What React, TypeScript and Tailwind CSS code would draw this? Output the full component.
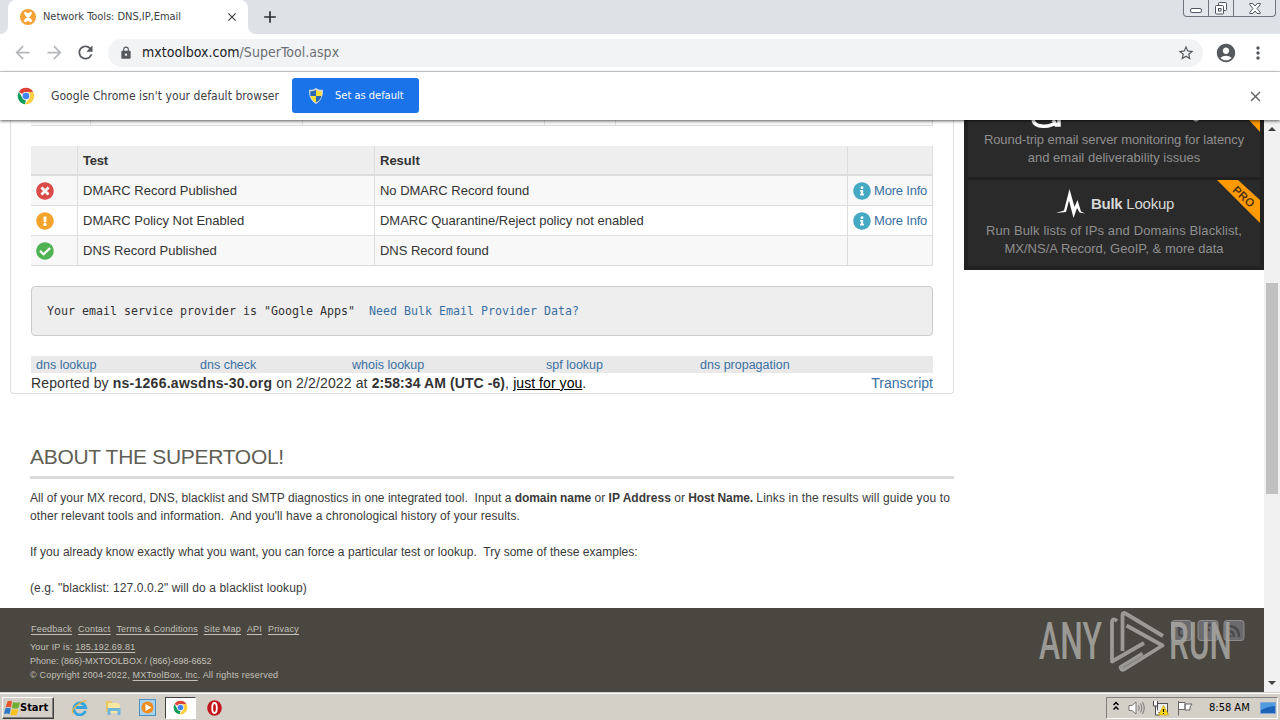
import type { ReactNode } from "react";
import {
  FaCheckCircle,
  FaExclamationCircle,
  FaInfoCircle,
  FaTimesCircle,
} from "react-icons/fa";
import {
  MdAccountCircle,
  MdAdd,
  MdArrowBack,
  MdArrowForward,
  MdClose,
  MdLock,
  MdMoreVert,
  MdRefresh,
  MdStarBorder,
} from "react-icons/md";

const MxIcon = () => (
  <svg width="16" height="16" viewBox="0 0 16 16">
    <circle cx="8" cy="8" r="8" fill="#f5a133" />
    <path d="M4.500 3.200Q8 7 11.500 3.200M4.500 12.800Q8 9 11.500 12.800M5 4l6 8M11 4l-6 8" stroke="#fff" strokeWidth="2.400" fill="none" />
  </svg>
);

const ChromeIcon = ({ size }: { size: number }) => (
  <svg width={size} height={size} viewBox="0 0 48 48">
    <circle cx="24" cy="24" r="22" fill="#fff" />
    <path d="M24 2a22 22 0 0 1 19.050 11H24a11 11 0 0 0-9.530 5.500L4.950 13A22 22 0 0 1 24 2z" fill="#db4437" />
    <path d="M4.950 13l9.520 16.500A11 11 0 0 0 24 35l-3 10.800A22 22 0 0 1 4.950 13z" fill="#0f9d58" />
    <path d="M43.050 13A22 22 0 0 1 21 45.800l12.500-16.300A11 11 0 0 0 24 13z" fill="#ffcd40" />
    <circle cx="24" cy="24" r="11" fill="#f1f1f1" />
    <circle cx="24" cy="24" r="8.800" fill="#4285f4" />
  </svg>
);

const ShieldIcon = () => (
  <svg width="16" height="16" viewBox="0 0 16 16">
    <path d="M8 0C10 1.600 12.500 2 15 1.800 15.300 8 13.200 13 8 16 2.800 13 .7 8 1 1.800 3.500 2 6 1.600 8 0z" fill="#cfd6dc" />
    <path d="M8 1.800v6.200H2.500C2.200 6.500 2.200 5 2.300 3.300 4.500 3.300 6.500 3 8 1.800zM8 8h5.400C12.800 10.800 11 13 8 14.500z" fill="#2a68b4" />
    <path d="M8 1.800v6.200h5.500c.3-1.500.3-3 .2-4.700C11.500 3.300 9.500 3 8 1.800zM8 8H2.600C3.200 10.800 5 13 8 14.500z" fill="#f9dd3a" />
  </svg>
);

const WindowButtons = () => (
  <div className="flex h-[17px] w-[93px] rounded-b-[4px] border border-t-0 border-[#6f757e] bg-[#e3e6eb]">
    <div className="flex w-[25px] items-center justify-center border-r border-[#6f757e]">
      <span className="mt-[5px] h-[5px] w-3 rounded-[2px] border border-[#50555e] bg-white" />
    </div>
    <div className="flex w-[25px] items-center justify-center border-r border-[#6f757e]">
      <svg width="14" height="13" viewBox="0 0 14 13" fill="#fff" stroke="#50555e">
        <rect x="4.500" y=".5" width="8" height="8" rx="1" />
        <rect x="1.500" y="3.500" width="8" height="8.500" rx="1" />
        <rect x="4.500" y="6.500" width="2.500" height="2.500" />
      </svg>
    </div>
    <div className="flex flex-1 items-center justify-center">
      <svg width="12" height="11" viewBox="0 0 12 11" fill="#fff" stroke="#50555e">
        <path d="M.8.500h3l2.200 2.500L8.200.500h3v1.200L8 5.500l3.200 3.800v1.200h-3L6 8l-2.200 2.500h-3V9.300L4 5.500.8 1.700z" />
      </svg>
    </div>
  </div>
);

const TabStrip = () => (
  <div className="flex h-[34px] justify-between bg-[#dee1e6]">
    <div className="flex">
      <div className="w-2 bg-white">
        <div className="h-full rounded-br-lg bg-[#dee1e6]" />
      </div>
      <div className="flex w-60 items-center rounded-t-lg bg-white pr-[9px] pl-3">
        <MxIcon />
        <span className="ml-[7px] flex-1 text-[11px] tracking-[-0.04px] whitespace-nowrap text-[#3c4043]">
          Network Tools: DNS,IP,Email
        </span>
        <MdClose size={14} className="text-[#3c4043]" />
      </div>
      <div className="w-2 bg-white">
        <div className="h-full rounded-bl-lg bg-[#dee1e6]" />
      </div>
      <MdAdd size={20} className="mt-[7px] ml-[4px] text-[#2c2f33]" />
    </div>
    <div className="mr-1">
      <WindowButtons />
    </div>
  </div>
);

const Toolbar = () => (
  <div className="flex h-[38px] items-center border-b border-[#d5d7da] bg-white pl-[12px]">
    <MdArrowBack size={21} className="text-[#b5b7ba]" />
    <MdArrowForward size={21} className="ml-[11px] text-[#b5b7ba]" />
    <MdRefresh size={21} className="ml-[10px] text-[#55585c]" />
    <div className="ml-[12px] flex h-7 w-[1095px] items-center rounded-full bg-[#f1f3f4] pr-2 pl-[11px]">
      <MdLock size={14} className="text-[#55585c]" />
      <span className="ml-[9px] flex-1 text-[14px] tracking-[0.03px] text-[#6b6f74]">
        <span className="text-[#202124]">mxtoolbox.com</span>/SuperTool.aspx
      </span>
      <MdStarBorder size={18} className="text-[#55585c]" />
    </div>
    <MdAccountCircle size={22} className="ml-[12px] text-[#55585c]" />
    <MdMoreVert size={20} className="ml-[11px] text-[#55585c]" />
  </div>
);

const InfoBar = () => (
  <div className="relative z-10 flex h-[48px] items-center bg-white pr-[16px] pl-[17px] shadow-[0_1px_3px_rgba(0,0,0,0.65)]">
    <ChromeIcon size={18} />
    <span className="ml-4 w-[241px] text-[12px] tracking-[0.06px] whitespace-nowrap text-[#3c4043]">
      Google Chrome isn't your default browser
    </span>
    <button className="mb-px flex h-[35px] w-[127px] items-center rounded-[3px] bg-[#1a73e8] pl-4 text-[11px] text-white">
      <ShieldIcon />
      <span className="ml-[11px] pt-px">Set as default</span>
    </button>
    <MdClose size={17} className="ml-auto text-[#5f6368]" />
  </div>
);

interface ResultRow {
  icon: ReactNode;
  test: string;
  result: string;
  moreInfo: boolean;
}

const rows: ResultRow[] = [
  {
    icon: <FaTimesCircle size={18} className="text-[#d94a48]" />,
    test: "DMARC Record Published",
    result: "No DMARC Record found",
    moreInfo: true,
  },
  {
    icon: <FaExclamationCircle size={18} className="text-[#f4a32c]" />,
    test: "DMARC Policy Not Enabled",
    result: "DMARC Quarantine/Reject policy not enabled",
    moreInfo: true,
  },
  {
    icon: <FaCheckCircle size={18} className="text-[#4fb354]" />,
    test: "DNS Record Published",
    result: "DNS Record found",
    moreInfo: false,
  },
];

const ResultsTable = () => (
  <div className="mt-5 w-[902px] text-[13px] text-[#333]">
    <div className="grid h-[30px] grid-cols-[46px_297px_473px_86px] border-b-2 border-[#ddd] bg-[#eee] leading-[29px] font-bold">
      <div />
      <div className="border-l border-[#ddd] pl-[5px] tracking-[-0.2px]">Test</div>
      <div className="border-l border-[#ddd] pl-[5px]">Result</div>
      <div className="border-x border-[#ddd]" />
    </div>
    {rows.map((row) => (
      <div
        key={row.test}
        className="grid h-[30px] grid-cols-[46px_297px_473px_86px] border-b border-[#ddd] leading-[29px] odd:bg-white even:bg-[#f8f8f8]"
      >
        <div className="flex items-center pt-[1.5px] pl-[4.5px]">{row.icon}</div>
        <div className="border-l border-[#ddd] pl-[5px]">{row.test}</div>
        <div className="border-l border-[#ddd] pl-[5px] tracking-[-0.02px]">{row.result}</div>
        <div className="flex items-center border-x border-[#ddd] pl-[4.5px]">
          {row.moreInfo && (
            <>
              <FaInfoCircle size={18} className="mt-[1.5px] text-[#45a9c4]" />
              <span className="ml-[3.5px] tracking-[-0.2px] text-[#3a70a3]">More Info</span>
            </>
          )}
        </div>
      </div>
    ))}
  </div>
);

const ResultCard = () => (
  <div className="ml-[10px] h-[274px] w-[944px] rounded-b-[4px] border border-t-0 border-[#ddd] pl-5">
    {/* last row of the record table that is scrolled under the bar */}
    <div className="grid h-[6px] w-[902px] grid-cols-[59px_212px_242px_71px_318px] border-b border-[#ddd] bg-[#f8f8f8]">
      <div />
      <div className="border-l border-[#ddd]" />
      <div className="border-l border-[#ddd]" />
      <div className="border-l border-[#ddd]" />
      <div className="border-x border-[#ddd]" />
    </div>
    <ResultsTable />
    <div className="mt-5 h-[50px] w-[902px] rounded-[4px] border border-[#ccc] bg-[#eee] pl-[15px] font-['DejaVu_Sans_Mono',monospace] text-[11.63px] leading-[48px] whitespace-pre text-[#333]">
      Your email service provider is "Google Apps"{"  "}
      <a className="text-[#3a70a3]">Need Bulk Email Provider Data?</a>
    </div>
    <div className="mt-5 grid h-[17px] w-[902px] grid-cols-[164px_151px_195px_154px_1fr] bg-[#e9e9e9] pl-[5px] text-[12.5px] leading-[18px] text-[#3a70a3]">
      <a>dns lookup</a>
      <a>dns check</a>
      <a className="pl-px">whois lookup</a>
      <a>spf lookup</a>
      <a>dns propagation</a>
    </div>
    <div className="flex w-[902px] justify-between text-[14px] leading-5 text-[#333]">
      <div className="tracking-[0.13px] whitespace-nowrap">
        Reported by <b className="tracking-[0.26px]">ns-1266.awsdns-30.org</b> on 2/2/2022 at{" "}
        <b className="tracking-[0.09px]">2:58:34 AM (UTC -6)</b>, <u className="tracking-[0.06px] text-black">just for you</u>.
      </div>
      <a className="text-[#3a70a3]">Transcript</a>
    </div>
  </div>
);

const About = () => (
  <div className="mt-[52px] ml-[30px] w-[924px] text-[12px] leading-[18px] text-[#3a3a3a]">
    <h2 className="h-[33px] border-b-3 border-[#dbdbdb] text-[21px] leading-[22px] tracking-[-0.3px] text-[#5f5e55]">
      ABOUT THE SUPERTOOL!
    </h2>
    <p className="mt-[10px] tracking-[0.03px] whitespace-pre">
      All of your MX record, DNS, blacklist and SMTP diagnostics in one integrated tool.{"  "}Input a{" "}
      <b className="tracking-[-0.1px]">domain name</b> or <b>IP Address</b> or{" "}
      <b className="tracking-[-0.15px]">Host Name.</b>
      <span className="tracking-[0.15px]"> Links in the results will guide you to</span>
      <span className="tracking-[0.07px]">
        {"\n"}other relevant tools and information.{"  "}And you'll have a chronological history of your results.
      </span>
    </p>
    <p className="mt-[18px] tracking-[0.03px] whitespace-pre">
      If you already know exactly what you want, you can force a particular test or lookup.{"  "}Try some of these examples:
    </p>
    <p className="mt-[18px] tracking-[0.11px]">
      (e.g. "blacklist: 127.0.0.2" will do a blacklist lookup)
    </p>
  </div>
);

const Sidebar = () => (
  <div className="h-[150px] w-[300px] overflow-hidden border-x-4 border-b-4 border-[#222] bg-[#2a2a2a] text-center text-[13px] leading-[18px] tracking-[-0.06px] text-[#8f8f8f]">
    <div className="relative h-[60px] border-b-3 border-[#202020] pt-[11px]">
      <svg className="absolute top-0 left-0" width="292" height="16" viewBox="0 0 292 16">
        <path d="M65 0C67 8 82 8 88 2M85 0l3 5h3V0" fill="none" stroke="#fff" strokeWidth="3.500" />
        <path d="M225 0q3 3 6 0" fill="#ccc" />
        <path d="M281 0h11v12z" fill="#f90" />
      </svg>
      Round-trip email server monitoring for latency
      <br />
      <span className="tracking-[0.02px]">and email deliverability issues</span>
    </div>
    <div className="relative pt-[7px]">
      <div className="flex h-[35px] items-start justify-center pt-[2px] pl-[2px] text-[15px] tracking-[-0.25px] text-[#d8d8d8]">
        <svg className="mr-[6px]" width="29" height="29" viewBox="0 0 29 29">
          <path d="M0 24L8 21.500 13.500 0 18.500 18 21.500 11 25 22.500 29 24.500 23.500 23.500 21 19 17.500 29 13 11.500 10 23z" fill="#fff" />
        </svg>
        <span className="mt-[6px]"><b>Bulk</b> Lookup</span>
      </div>
      <span className="tracking-[0.12px]">Run Bulk lists of IPs and Domains Blacklist,</span>
      <br />
      <span className="tracking-[0.01px]">MX/NS/A Record, GeoIP, &amp; more data</span>
      <svg className="absolute top-0 right-0" width="43" height="44" viewBox="0 0 43 44">
        <path d="M0 0h21l22 20v23z" fill="#f90" />
        <text x="15" y="11" transform="rotate(43 15 11)" fontSize="11" fill="#3b2a10" letterSpacing=".5" stroke="#3b2a10" strokeWidth=".3">
          PRO
        </text>
      </svg>
    </div>
  </div>
);

const Watermark = () => (
  <svg className="absolute top-0 left-[1030px] overflow-visible opacity-85" width="234" height="84" viewBox="0 0 234 84">
    <g fill="#a9a8a3" fontFamily="Roboto" fontWeight="500" fontSize="52">
      <text x="9" y="51" textLength="63" lengthAdjust="spacingAndGlyphs">ANY</text>
      <text x="139" y="51" textLength="63" lengthAdjust="spacingAndGlyphs">RUN</text>
    </g>
    <g fill="none" stroke="#a9a8a3" strokeWidth="3.800" strokeLinejoin="round">
      <path d="M87 13q-5-4-5 2v38.500l32-18.500" />
      <path d="M92.500 43V7q0-3 3-1.500l37.500 22.500" />
      <path d="M96.500 17.500l36 20L94 61.500q-3 1-3.500-2.500l22-13.500" />
    </g>
  </svg>
);

const SocialIcons = () => (
  <svg className="absolute top-[12px] left-[1171px] opacity-75" width="74" height="21" viewBox="0 0 74 21">
    <g fill="#77777d" stroke="#a5a5a9">
      <rect x=".5" y=".5" width="20" height="20" rx="3" />
      <rect x="27" y=".5" width="20" height="20" rx="3" />
      <rect x="53" y=".5" width="20" height="20" rx="3" />
    </g>
    <path d="M8 5v8q0 3 5 3M8 9h5M40 5q-4-1-4 4v8M33 10h6M57 6q11 0 11 11M57 11q6 0 6 6" fill="none" stroke="#4c4b50" strokeWidth="2.400" />
    <circle cx="59" cy="16" r="1.600" fill="#4c4b50" />
  </svg>
);

const PageFooter = () => (
  <div className="relative h-[84px] bg-[#4a4640] pt-[14px] pl-[30px] text-[9px] leading-[14px] tracking-[0.19px] text-[#c3c0ba]">
    <div className="flex gap-[6px] pl-px underline underline-offset-2">
      <a>Feedback</a>
      <a>Contact</a>
      <a>Terms &amp; Conditions</a>
      <a>Site Map</a>
      <a>API</a>
      <a>Privacy</a>
    </div>
    <p className="mt-[4px]">Your IP is: <u className="underline-offset-2">185.192.69.81</u></p>
    <p className="tracking-[0]">Phone: (866)-MXTOOLBOX / (866)-698-6652</p>
    <p>© Copyright 2004-2022, <u className="underline-offset-2">MXToolBox, Inc</u>. All rights reserved</p>
    <SocialIcons />
    <Watermark />
  </div>
);

const Scrollbar = () => (
  <div className="flex w-4 flex-col items-center bg-[#f1f1f1]">
    <svg className="mt-px" width="16" height="16" viewBox="0 0 16 16">
      <path d="M4 10l4-4 4 4z" fill="#404040" />
    </svg>
    <div className="mt-[146px] h-[211px] w-3 bg-[#c1c1c1]" />
    <svg className="mt-auto" width="16" height="18" viewBox="0 0 16 18">
      <path d="M4 7l4 4 4-4z" fill="#404040" />
    </svg>
  </div>
);

const Taskbar = () => (
  <div className="flex h-7 items-center border-t border-[#d4d0c8] bg-[#d4d0c8] pl-[2px] text-[11px] text-black shadow-[inset_0_1px_0_#fff]">
    <div className="mt-[2px] flex h-[22px] w-[52px] items-center border border-t-white border-r-[#404040] border-b-[#404040] border-l-white pl-px shadow-[inset_-1px_-1px_0_#808080]">
      <svg width="16" height="16" viewBox="0 0 16 16">
        <path d="M3.500 1.500Q6 0 8 1.500L7 7.500Q4.500 6.200 1.500 7.500z" fill="#e8562a" />
        <path d="M9 2q3 1.300 7 0l-1.500 6Q11 9.200 8 8z" fill="#6fae2e" />
        <path d="M1.300 8.500q2.500-1.300 5.500 0L5.500 14.200Q3.200 13 0 14.200z" fill="#2f79c9" />
        <path d="M7.800 9q3 1.200 6.500 0l-1.500 5.800q-3 1.200-6.500 0z" fill="#fbc11f" />
      </svg>
      <span className="pt-px font-bold">Start</span>
    </div>
    <svg className="mt-[2px] ml-[17px]" width="17" height="17" viewBox="0 0 17 17">
      <path d="M14.500 12A6 6 0 1 1 14.700 8.500H5" fill="none" stroke="#35a3de" strokeWidth="2.800" />
      <path d="M2 14.500C-1 11 10 1 15.500 2" fill="none" stroke="#e7b53a" strokeWidth="1.400" />
    </svg>
    <svg className="mt-[2px] ml-[17px]" width="17" height="17" viewBox="0 0 17 17">
      <path d="M1 2h5l1 2h6v9H1z" fill="#e9c75c" />
      <path d="M3 4h10l2 2v8H3z" fill="#f8e7a0" />
      <path d="M2.500 9h13v7h-3v-4h-7v4h-3z" fill="#6fb7dc" />
    </svg>
    <svg className="mt-[2px] ml-[17px]" width="17" height="17" viewBox="0 0 17 17">
      <rect x=".5" y=".5" width="16" height="16" fill="#a9d2ef" stroke="#4b8fc7" />
      <circle cx="8.500" cy="8.500" r="6" fill="#f08c1c" />
      <path d="M6.500 5l6 3.500-6 3.500z" fill="#fff" />
    </svg>
    <div className="mt-[2px] ml-[9px] flex h-[22px] w-[31px] items-center justify-center border border-t-[#404040] border-r-white border-b-white border-l-[#404040] bg-white">
      <ChromeIcon size={15} />
    </div>
    <svg className="mt-[2px] ml-[11px]" width="15" height="16" viewBox="0 0 15 16">
      <ellipse cx="7.500" cy="8" rx="7.300" ry="7.800" fill="#c3161c" />
      <ellipse cx="7.500" cy="8" rx="2.300" ry="5" fill="none" stroke="#fff" strokeWidth="1.800" />
    </svg>
    <div className="mt-[2px] mr-[2px] ml-auto flex h-[22px] w-[172px] items-center border border-t-[#808080] border-r-white border-b-white border-l-[#808080] pl-[6px]">
      <svg className="mb-[3px]" width="6" height="10" viewBox="0 0 6 10" fill="none" stroke="#000" strokeWidth="1.500">
        <path d="M.5 4L3 1.500 5.500 4M.5 8.500L3 6l2.500 2.500" />
      </svg>
      <svg className="ml-[9px]" width="17" height="16" viewBox="0 0 17 16" stroke="#777" fill="none">
        <path d="M1 5.500h3L8 2v12L4 10.500H1z" fill="#fff" />
        <path d="M10.500 5.500q1.500 2.500 0 5M12.500 3.500q3 4.500 0 9M14.500 2q3.500 6 0 12" />
      </svg>
      <svg className="ml-[7px]" width="17" height="16" viewBox="0 0 17 16">
        <rect x="5.500" y="3.500" width="10" height="9" fill="#eee" stroke="#555" />
        <path d="M1.500 1v5h4V1M3.500 6v9h4" fill="#fff" stroke="#444" />
        <path d="M11.500 5.500l5 9.500h-10z" fill="#ffd91c" stroke="#b89200" strokeWidth=".6" />
        <path d="M11.500 9v3M11.500 13v1" stroke="#000" strokeWidth="1.200" />
      </svg>
      <svg className="ml-[8px]" width="16" height="16" viewBox="0 0 16 16" fill="#fff" stroke="#666">
        <path d="M1.500 1v14.500M1.500 2.500H8v7H1.500M8 4h7l-2 3 0 3H8z" />
      </svg>
      <span className="ml-[16px] pt-px whitespace-nowrap">8:58 AM</span>
      <svg className="ml-[10px]" width="16" height="14" viewBox="0 0 16 14">
        <rect x=".5" y="1.500" width="15" height="11" fill="#1c63b8" stroke="#7fa9d6" />
        <path d="M1 2h14v3Q9 5 1 9z" fill="#4f9be0" />
      </svg>
    </div>
  </div>
);

export default function App() {
  return (
    <div className="flex h-[720px] w-[1280px] flex-col overflow-hidden bg-white font-['DejaVu_Sans_Condensed','DejaVu_Sans','Noto_Sans',sans-serif]">
      <TabStrip />
      <Toolbar />
      <InfoBar />
      <div className="flex h-[572px]">
        <div className="flex w-[1264px] flex-col justify-between font-['Liberation_Sans',Arial,sans-serif]">
          <div className="flex">
            <div className="w-[964px]">
              <ResultCard />
              <About />
            </div>
            <Sidebar />
          </div>
          <PageFooter />
        </div>
        <Scrollbar />
      </div>
      <Taskbar />
    </div>
  );
}
